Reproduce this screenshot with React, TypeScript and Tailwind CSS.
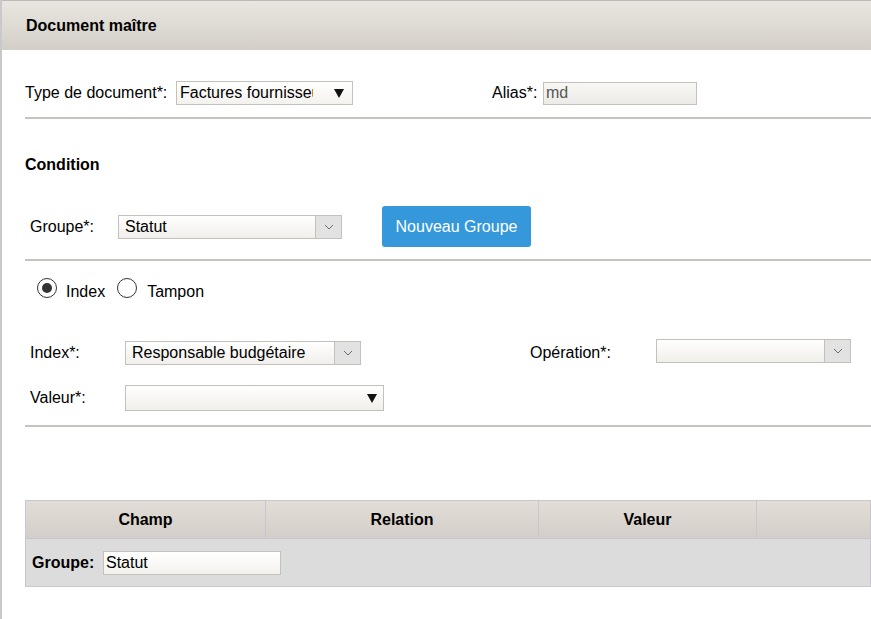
import React from "react";

const font = { fontFamily: '"Liberation Sans", Arial, sans-serif' };

function Chevron() {
  return (
    <div className="flex h-full w-[26px] items-center justify-center border-l border-[#c4c0ba] bg-[#e2e2e2]">
      <svg width="10" height="6" viewBox="0 0 10 6">
        <path d="M1 1 L5 5 L9 1" fill="none" stroke="#6b6b6b" strokeWidth="1" />
      </svg>
    </div>
  );
}

function Triangle() {
  return (
    <svg width="10" height="11" viewBox="0 0 10 11">
      <path d="M0 1 L10 1 L5 10 Z" fill="#111" />
    </svg>
  );
}

function SelectChevron({ w, h = 24, text }: { w: string; h?: number; text?: string }) {
  return (
    <div
      className={`flex ${w} items-stretch border border-[#c4c0ba] bg-gradient-to-b from-white to-[#f1efeb]`}
      style={{ height: h }}
    >
      <div className="flex flex-1 items-center overflow-hidden whitespace-nowrap pl-[6px] text-[16px] text-black">
        {text}
      </div>
      <Chevron />
    </div>
  );
}

function Radio({ checked }: { checked?: boolean }) {
  return (
    <div className="flex h-[20px] w-[20px] items-center justify-center rounded-full border border-[#333] bg-white">
      {checked && <div className="h-[10px] w-[10px] rounded-full bg-[#333]" />}
    </div>
  );
}

export default function App() {
  return (
    <div className="min-h-[619px] w-full border-l-2 border-[#c9c9c9] bg-white text-black" style={font}>
      <div className="flex h-[50px] items-center border-t border-[#bdbab4] bg-gradient-to-b from-[#e9e6e1] to-[#d3cec7] pl-[24px] text-[16px] font-bold">
        Document maître
      </div>

      <div className="pl-[23px]">
        {/* Row 1 */}
        <div className="mt-[31px] flex h-[24px] items-center text-[16px]">
          <div className="w-[151px]">Type de document*:</div>
          <div className="flex h-[24px] w-[177px] items-center border border-[#c4c0ba] bg-gradient-to-b from-white to-[#f3f2ee] pl-[3px] pr-[8px]">
            <div className="w-[133px] overflow-hidden whitespace-nowrap">Factures fournisseurs</div>
            <div className="ml-auto flex items-center">
              <Triangle />
            </div>
          </div>
          <div className="ml-[139px] w-[51px]">Alias*:</div>
          <div className="flex h-[23px] w-[154px] items-center border border-[#c4c0ba] bg-gradient-to-b from-[#f8f7f4] to-[#ecebe7] pl-[2px] text-[#555]">
            md
          </div>
        </div>

        <div className="mt-[12px] h-[2px] bg-[#c6c3be]" />

        <div className="mt-[36px] text-[16px] font-bold leading-[20px]">Condition</div>

        {/* Groupe row */}
        <div className="mt-[31px] flex h-[41px] items-center text-[16px]">
          <div className="w-[93px] pl-[5px]">Groupe*:</div>
          <SelectChevron w="w-[224px]" text="Statut" />
          <button className="ml-[40px] h-[41px] w-[149px] rounded-[3px] bg-[#3498db] text-[16px] text-white">
            Nouveau Groupe
          </button>
        </div>

        <div className="mt-[12px] h-[2px] bg-[#c6c3be]" />

        {/* Radios */}
        <div className="mt-[17px] flex h-[20px] items-center text-[16px]">
          <div className="ml-[12px]">
            <Radio checked />
          </div>
          <div className="ml-[9px] mt-[8px]">Index</div>
          <div className="ml-[12px]">
            <Radio />
          </div>
          <div className="ml-[10px] mt-[8px]">Tampon</div>
        </div>

        {/* Index row */}
        <div className="mt-[41px] flex h-[26px] items-start text-[16px]">
          <div className="mt-[2px] flex h-[24px] w-[100px] items-center pl-[5px]">Index*:</div>
          <div className="mt-[2px]">
            <SelectChevron w="w-[236px]" text="Responsable budgétaire" />
          </div>
          <div className="ml-[169px] mt-[2px] flex h-[24px] w-[126px] items-center">Opération*:</div>
          <SelectChevron w="w-[195px]" />
        </div>

        {/* Valeur row */}
        <div className="mt-[20px] flex h-[26px] items-center text-[16px]">
          <div className="w-[100px] pl-[5px]">Valeur*:</div>
          <div className="flex h-[26px] w-[259px] items-center justify-end border border-[#c4c0ba] bg-gradient-to-b from-white to-[#f1efeb] pr-[6px]">
            <Triangle />
          </div>
        </div>

        <div className="mt-[14px] h-[2px] bg-[#c6c3be]" />

        {/* Table */}
        <div className="mt-[73px] border border-[#c9c6cf] text-[16px]">
          <div className="flex h-[37px] bg-gradient-to-b from-[#e2ded7] to-[#d3cec7] font-bold">
            <div className="flex w-[240px] items-center justify-center border-r border-[#c9c6cf]">Champ</div>
            <div className="flex w-[273px] items-center justify-center border-r border-[#c9c6cf]">Relation</div>
            <div className="flex w-[218px] items-center justify-center border-r border-[#c9c6cf]">Valeur</div>
            <div className="flex-1" />
          </div>
          <div className="flex h-[48px] items-center border-t border-[#c9c6cf] bg-[#dcdcdc] pl-[6px]">
            <div className="w-[71px] font-bold">Groupe:</div>
            <div className="flex h-[24px] w-[178px] items-center border border-[#c4c0ba] bg-gradient-to-b from-white to-[#f3f2ee] pl-[2px]">
              Statut
            </div>
          </div>
        </div>
      </div>
    </div>
  );
}
